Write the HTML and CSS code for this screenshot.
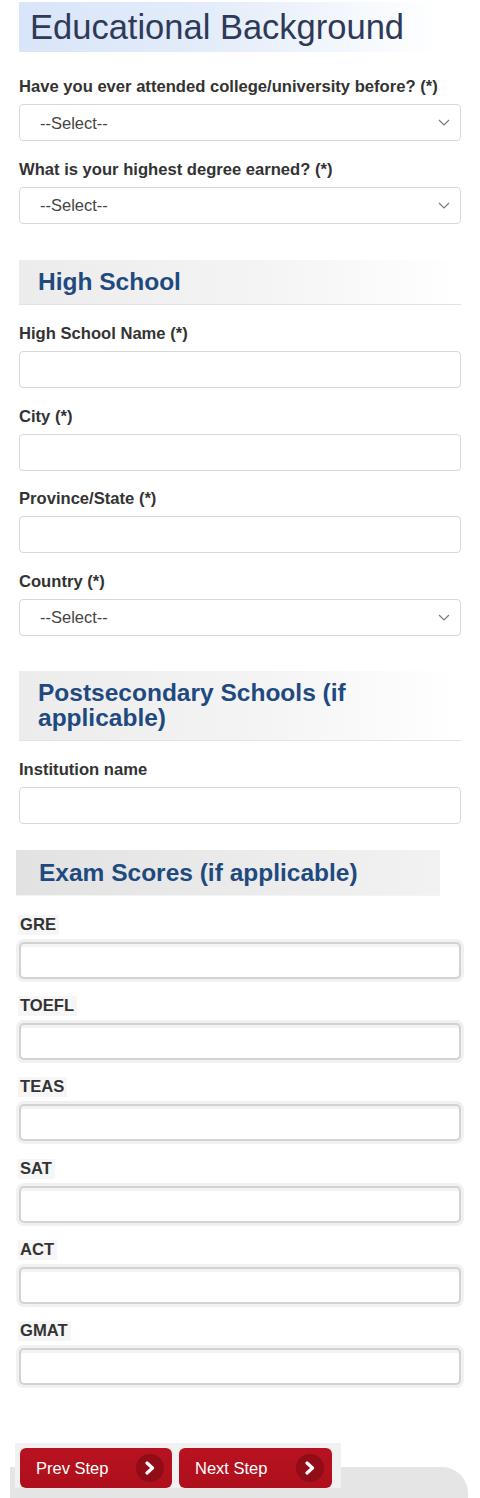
FILE: index.html
```html
<!DOCTYPE html>
<html lang="en">
<head>
<meta charset="utf-8">
<title>Educational Background</title>
<link rel="stylesheet" href="styles.css">
</head>
<body>
<div class="page">
  <h1 class="title">Educational Background</h1>

  <div class="field first">
    <label>Have you ever attended college/university before? (*)</label>
    <div class="select-wrap">
      <select class="control select"><option>--Select--</option></select>
      <svg class="chev" width="12" height="7" viewBox="0 0 12 7"><path d="M1 1 L6 6 L11 1" fill="none" stroke="#7a7a7a" stroke-width="1.2"/></svg>
    </div>
  </div>
  <div class="field">
    <label>What is your highest degree earned? (*)</label>
    <div class="select-wrap">
      <select class="control select"><option>--Select--</option></select>
      <svg class="chev" width="12" height="7" viewBox="0 0 12 7"><path d="M1 1 L6 6 L11 1" fill="none" stroke="#7a7a7a" stroke-width="1.2"/></svg>
    </div>
  </div>

  <h2 class="section">High School</h2>
  <div class="field">
    <label>High School Name (*)</label>
    <input class="control" type="text">
  </div>
  <div class="field">
    <label>City (*)</label>
    <input class="control" type="text">
  </div>
  <div class="field">
    <label>Province/State (*)</label>
    <input class="control" type="text">
  </div>
  <div class="field">
    <label>Country (*)</label>
    <div class="select-wrap">
      <select class="control select"><option>--Select--</option></select>
      <svg class="chev" width="12" height="7" viewBox="0 0 12 7"><path d="M1 1 L6 6 L11 1" fill="none" stroke="#7a7a7a" stroke-width="1.2"/></svg>
    </div>
  </div>

  <h2 class="section post-head">Postsecondary Schools (if<br>applicable)</h2>
  <div class="field">
    <label>Institution name</label>
    <input class="control" type="text">
  </div>

  <h2 class="section exam-head">Exam Scores (if applicable)</h2>
  <div class="field exam">
    <label>GRE</label>
    <input class="control" type="text">
  </div>
  <div class="field exam">
    <label>TOEFL</label>
    <input class="control" type="text">
  </div>
  <div class="field exam">
    <label>TEAS</label>
    <input class="control" type="text">
  </div>
  <div class="field exam">
    <label>SAT</label>
    <input class="control" type="text">
  </div>
  <div class="field exam">
    <label>ACT</label>
    <input class="control" type="text">
  </div>
  <div class="field exam">
    <label>GMAT</label>
    <input class="control" type="text">
  </div>

  <div class="footer">
    <div class="btn-strip">
      <button class="btn" type="button"><span>Prev Step</span><span class="btn-ico"><svg width="12" height="14" viewBox="0 0 12 14"><path d="M3 2 L8.5 7 L3 12" fill="none" stroke="#fff" stroke-width="3.2" stroke-linecap="round" stroke-linejoin="round"/></svg></span></button>
      <button class="btn" type="button"><span>Next Step</span><span class="btn-ico"><svg width="12" height="14" viewBox="0 0 12 14"><path d="M3 2 L8.5 7 L3 12" fill="none" stroke="#fff" stroke-width="3.2" stroke-linecap="round" stroke-linejoin="round"/></svg></span></button>
    </div>
  </div>
</div>
</body>
</html>
```

FILE: styles.css
```css
* { box-sizing: border-box; }

html, body {
  margin: 0;
  padding: 0;
  background: #ffffff;
}

body {
  font-family: "Liberation Sans", Arial, sans-serif;
  color: #333333;
  height: 1498px;
  overflow: hidden;
}

.page {
  padding: 2px 19px 0;
}

.title {
  margin: 0;
  width: 421px;
  height: 50px;
  padding-left: 11px;
  font-size: 34.5px;
  font-weight: normal;
  line-height: 50px;
  color: #2e3a58;
  background: linear-gradient(90deg, #d9e5f8 0%, #e3ecfa 45%, #ffffff 100%);
  white-space: nowrap;
}

.field {
  margin-bottom: 18.5px;
}

.field.first {
  margin-top: 25px;
}

.field label {
  display: block;
  font-size: 16.6px;
  font-weight: bold;
  line-height: 20px;
  color: #333333;
  margin-bottom: 7px;
  white-space: nowrap;
}

.control {
  display: block;
  width: 100%;
  height: 37px;
  border: 1px solid #d8d8d8;
  border-radius: 4px;
  background: #ffffff;
  font-family: "Liberation Sans", Arial, sans-serif;
  font-size: 16.5px;
  color: #444444;
  margin: 0;
}

.select-wrap {
  position: relative;
}

.select {
  -webkit-appearance: none;
  appearance: none;
  padding: 0 0 0 20px;
}

.chev {
  position: absolute;
  right: 11px;
  top: 15px;
}

.section {
  margin: 36px 0 19px;
  padding: 9.5px 19px 10px;
  font-size: 24.5px;
  font-weight: bold;
  line-height: 25px;
  color: #1f4a7f;
  background: linear-gradient(90deg, #ececec 0%, #f4f4f4 55%, #ffffff 100%);
  border-bottom: 1px solid #e2e2e2;
}

.post-head {
  margin-top: 35px;
}

.exam-head {
  margin: 26px 0 19px -3px;
  width: 424px;
  padding-left: 23px;
  background: linear-gradient(90deg, #e2e2e2 0%, #ececec 60%, #f2f2f2 100%);
  border-bottom: 1px solid #f4f4f4;
}

.field.exam {
  margin-bottom: 17.4px;
}

.field.exam label {
  width: fit-content;
  margin-left: -1px;
  padding: 0 3px 0 2px;
  background: #f6f6f6;
}

.field.exam .control {
  border: 2px solid #d2d2d2;
  border-radius: 5px;
  box-shadow: 0 0 0 3px #f1f1f1, inset 0 3px 0 #f3f3f3;
}

.footer {
  position: relative;
  margin: 58px -9px 0;
  height: 60px;
}

.footer::before {
  content: "";
  position: absolute;
  left: 0;
  right: 2px;
  top: 24px;
  bottom: 0;
  background: #e5e5e5;
  border-top-right-radius: 26px;
}

.btn-strip {
  position: relative;
  display: flex;
  gap: 7px;
  width: 326px;
  margin-left: 5px;
  padding: 5px 0 0 5px;
  background: #f1f1f1;
}

.btn {
  display: flex;
  align-items: center;
  justify-content: space-between;
  width: 152px;
  height: 40px;
  padding: 0 8px 0 16px;
  border: none;
  border-radius: 6px;
  background: linear-gradient(180deg, #b8121f 0%, #ae0f1c 100%);
  color: #ffffff;
  font-family: "Liberation Sans", Arial, sans-serif;
  font-size: 16.5px;
  cursor: pointer;
}

.btn + .btn {
  width: 153px;
}

.btn-ico {
  display: flex;
  align-items: center;
  justify-content: center;
  width: 28px;
  height: 28px;
  border-radius: 50%;
  background: radial-gradient(circle at 50% 50%, #960d18 0%, #8c0c16 100%);
}
```
